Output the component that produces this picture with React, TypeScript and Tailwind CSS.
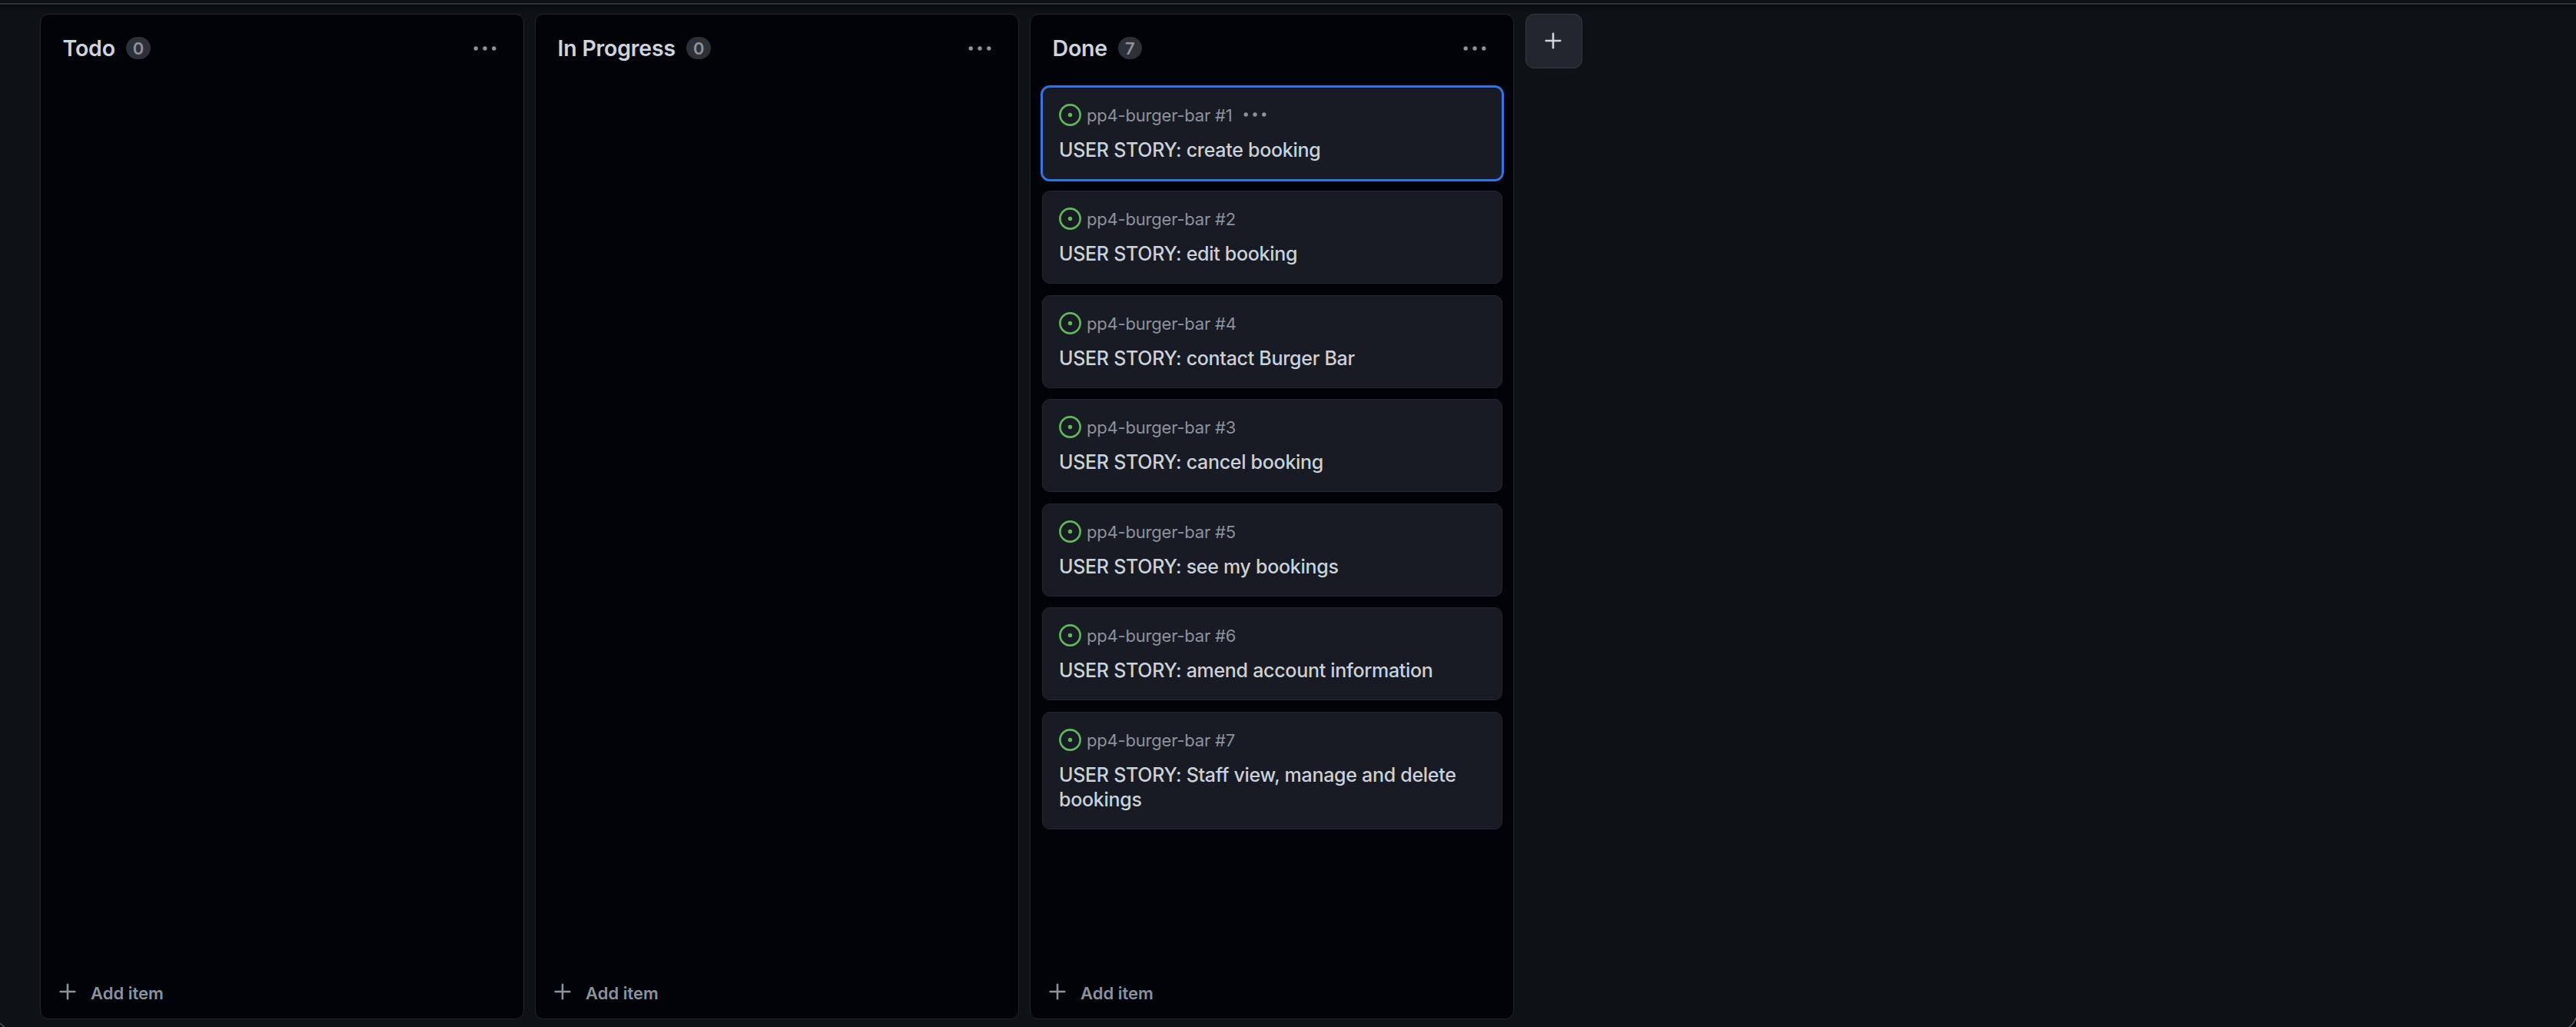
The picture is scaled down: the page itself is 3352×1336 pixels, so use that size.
type Item = { id: number; title: string; selected?: boolean };
type ColumnData = { name: string; items: Item[] };

const columns: ColumnData[] = [
  { name: "Todo", items: [] },
  { name: "In Progress", items: [] },
  {
    name: "Done",
    items: [
      { id: 1, title: "USER STORY: create booking", selected: true },
      { id: 2, title: "USER STORY: edit booking" },
      { id: 4, title: "USER STORY: contact Burger Bar" },
      { id: 3, title: "USER STORY: cancel booking" },
      { id: 5, title: "USER STORY: see my bookings" },
      { id: 6, title: "USER STORY: amend account information" },
      { id: 7, title: "USER STORY: Staff view, manage and delete bookings" },
    ],
  },
];

function IssueOpenIcon() {
  return (
    <svg viewBox="0 0 16 16" className="h-[29px] w-[29px] shrink-0 text-[#61b75b]" fill="none">
      <circle cx="8" cy="8" r="7.25" stroke="currentColor" strokeWidth="1.45" />
      <circle cx="8" cy="8" r="1.5" fill="currentColor" />
    </svg>
  );
}

function KebabIcon() {
  return (
    <svg viewBox="0 0 30 6" className="h-[6px] w-[30px] shrink-0" fill="currentColor">
      <circle cx="3.2" cy="3" r="2.7" />
      <circle cx="15" cy="3" r="2.7" />
      <circle cx="26.8" cy="3" r="2.7" />
    </svg>
  );
}

function PlusIcon() {
  return (
    <svg viewBox="0 0 22 22" className="h-[22px] w-[22px] shrink-0" fill="none">
      <path d="M11 1.7v18.6M1.7 11h18.6" stroke="currentColor" strokeWidth="2.6" strokeLinecap="round" />
    </svg>
  );
}

function Card({ item }: { item: Item }) {
  return (
    <article
      className={
        item.selected
          ? "rounded-[10px] border border-[#3572e3] bg-[#181b23] px-[21px] pt-[21px] pb-[21.5px] shadow-[0_0_0_2px_#3572e3]"
          : "rounded-[10px] border border-[#23262c] bg-[#181b23] px-[21px] pt-[21px] pb-[21.5px]"
      }
    >
      <div className="flex h-[29px] items-center text-[#8b929c]">
        <IssueOpenIcon />
        <span className="ml-[7px] pt-[2px] text-[22px] leading-[29px] font-[430] tracking-[-0.2px]">
          pp4-burger-bar #{item.id}
        </span>
        {item.selected && (
          <button className="ml-[14px]" aria-label="Item actions">
            <KebabIcon />
          </button>
        )}
      </div>
      <h3 className="mt-[15px] text-[25px] leading-[32.5px] font-[450] tracking-[-0.29px] text-[#c9d1d9]">
        {item.title}
      </h3>
    </article>
  );
}

function Column({ column }: { column: ColumnData }) {
  return (
    <section className="flex w-[630px] shrink-0 flex-col rounded-[11px] border border-[#212429] bg-[#020308]">
      <header className="flex h-[87px] items-center pr-[35px] pl-[28.5px]">
        <h2 className="text-[28.5px] leading-[30px] font-[640] tracking-[-0.2px] text-[#cdd4dd]">
          {column.name}
        </h2>
        <span className="ml-[14px] flex h-[29px] items-center rounded-full bg-[#2e3038] px-[9px] text-[22px] leading-none font-semibold text-[#8b929c]">
          {column.items.length}
        </span>
        <button className="ml-auto text-[#8b929c]" aria-label="Column actions">
          <KebabIcon />
        </button>
      </header>
      <div className="flex flex-1 flex-col gap-[14.55px] pt-[6.6px] pr-[14px] pl-[15px]">
        {column.items.map((item) => (
          <Card key={item.id} item={item} />
        ))}
      </div>
      <button className="flex h-[70px] items-center pl-[24px] text-[#8b929c]">
        <PlusIcon />
        <span className="ml-[19px] pt-[4px] text-[22px] leading-none font-semibold">Add item</span>
      </button>
    </section>
  );
}

export default function App() {
  return (
    <main className="relative flex h-[1336px] w-[3352px] flex-col overflow-hidden bg-[#0e1116] font-['Inter',sans-serif]">
      <div className="h-[4px] shrink-0" />
      <div className="h-[2px] shrink-0 bg-[#2d3035]" />
      <div className="h-[12px] shrink-0 bg-linear-to-b from-[#080a0e] to-[#0f1217]" />
      <div className="flex h-[1308px] gap-[14px] pl-[52px]">
        {columns.map((column) => (
          <Column key={column.name} column={column} />
        ))}
        <button
          className="ml-px flex h-[71px] w-[74px] items-center justify-center rounded-[11px] border border-[#373a40] bg-[#23262e] pr-[2px] pb-[1px] text-[#cdd4dd]"
          aria-label="Add column"
        >
          <PlusIcon />
        </button>
      </div>
      <svg className="absolute bottom-0 left-0 h-[6px] w-[7px]" viewBox="0 0 7 6" fill="none">
        <path d="M0 1Q2.500 4 6 6H0Z" fill="#020308" />
        <path d="M0 1Q2.500 4 6 6" stroke="#4a4d52" strokeWidth="1.500" />
      </svg>
      <svg className="absolute right-0 bottom-0 h-[13px] w-[10px]" viewBox="0 0 10 13" fill="none">
        <path d="M10 2Q7.500 9 1 13H10Z" fill="#05030f" />
        <path d="M10 1Q7.500 8.500 1 13" stroke="#5a5c60" strokeWidth="1.500" />
      </svg>
    </main>
  );
}
